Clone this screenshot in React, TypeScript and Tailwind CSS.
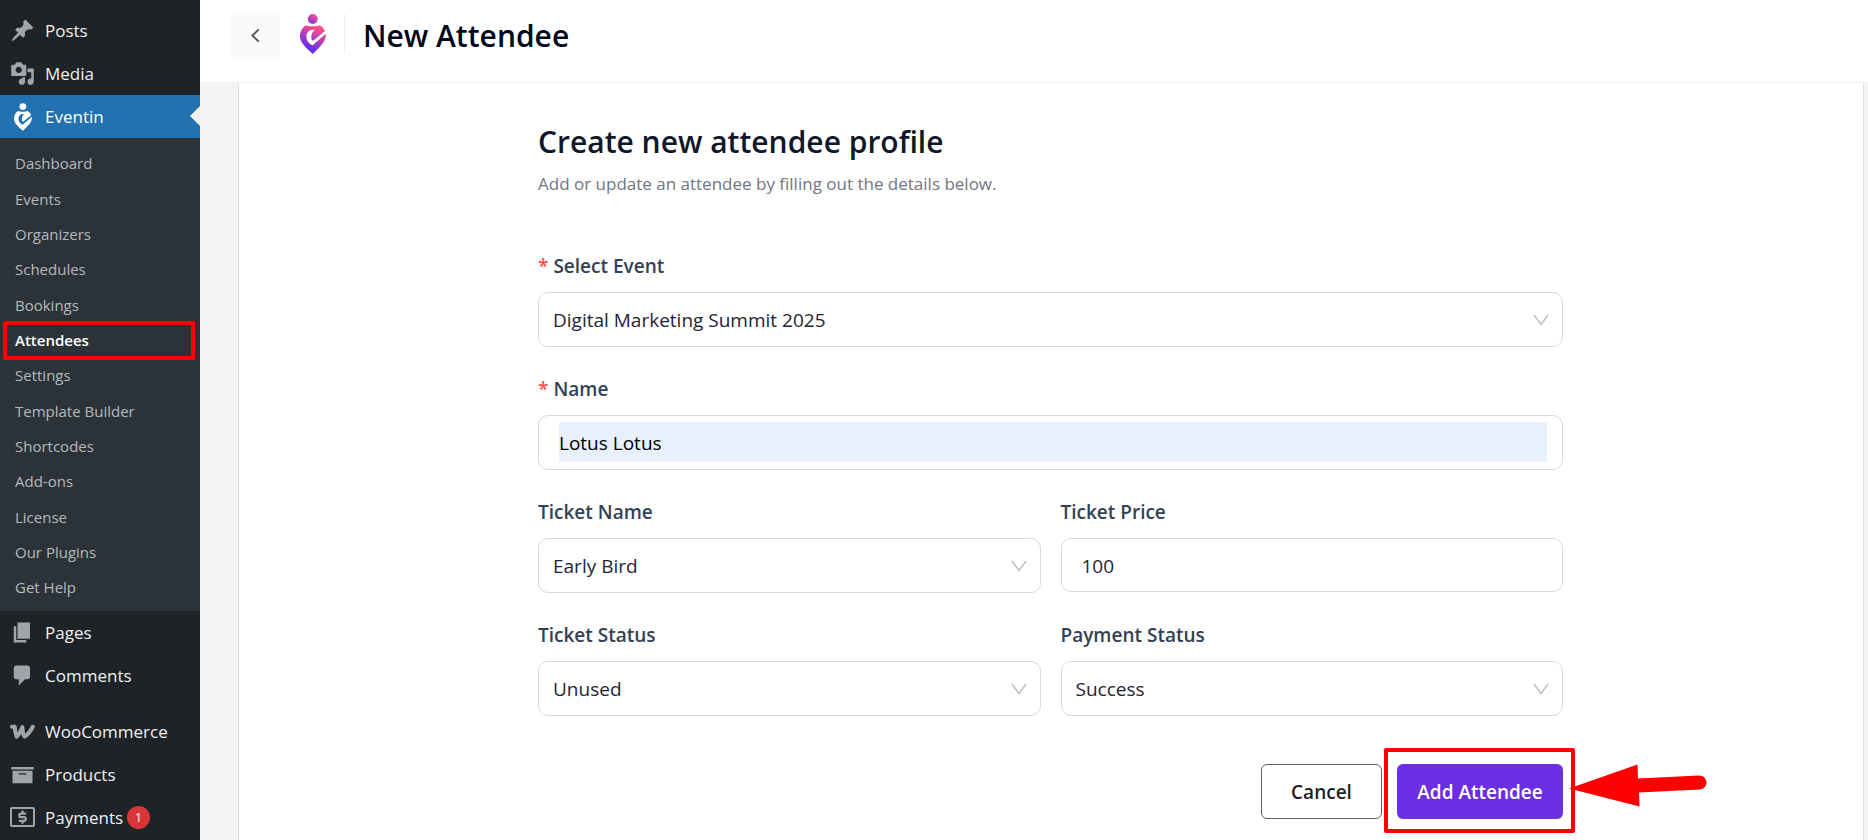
import { useState } from "react";

type IconProps = { className?: string };

const PATHS = {
  post: "M10.44 3.02l1.82-1.82 6.36 6.35-1.83 1.82c-1.05-.68-2.48-.57-3.41.36l-.75.75c-.92.93-1.04 2.35-.35 3.41l-1.83 1.82-2.41-2.41-2.8 2.79c-.42.42-3.38 2.71-3.8 2.29s1.86-3.39 2.28-3.81l2.79-2.79L4.1 9.36l1.83-1.82c1.05.69 2.48.57 3.4-.36l.75-.75c.93-.92 1.05-2.35.36-3.41z",
  media: "M13 11V4c0-.55-.45-1-1-1h-1.67L9 1H5L3.67 3H2c-.55 0-1 .45-1 1v7c0 .55.45 1 1 1h10c.55 0 1-.45 1-1zM7 4.5c1.38 0 2.5 1.12 2.5 2.5S8.38 9.5 7 9.5 4.5 8.38 4.5 7 5.62 4.5 7 4.5zM14 6h5v10.5c0 1.38-1.12 2.5-2.5 2.5S14 17.88 14 16.5s1.12-2.5 2.5-2.5c.17 0 .34.02.5.05V9h-3V6zm-4 8.05V13h2v3.5c0 1.38-1.12 2.5-2.5 2.5S7 17.88 7 16.5 8.12 14 9.5 14c.17 0 .34.02.5.05z",
  page: "M6 15V2h10v13H6zm-1 1h8v2H3V5h2v11z",
  comment: "M5 2h9c1.1 0 2 .9 2 2v7c0 1.1-.9 2-2 2h-2l-5 5v-5H5c-1.1 0-2-.9-2-2V4c0-1.1.9-2 2-2z",
  archive: "M19 4v2H1V4h18zM2 7h16v10H2V7zm11 3V9H7v1h6z",
};

function Dashicon({ name }: { name: keyof typeof PATHS }) {
  return (
    <svg className="size-[25px] shrink-0" viewBox="0 0 20 20" fill="currentColor" aria-hidden="true">
      <path d={PATHS[name]} />
    </svg>
  );
}

function WooIcon() {
  return (
    <svg className="size-[25px] shrink-0" viewBox="0 0 25 25" fill="none" stroke="currentColor" aria-hidden="true">
      <path
        d="M2 7.8H4.8C5 12 5.6 15.2 6.8 17.6C9 15.6 10.8 12 12.4 8C12.5 12 13 15.4 14.6 17.6C17.6 16 20.6 12 22.8 7.8"
        strokeWidth="4"
        strokeLinecap="round"
        strokeLinejoin="round"
      />
    </svg>
  );
}

function PaymentsIcon() {
  return (
    <svg className="size-[25px] shrink-0" viewBox="0 0 25 25" fill="none" stroke="currentColor" aria-hidden="true">
      <rect x="1" y="3" width="23" height="18" rx="1" strokeWidth="2" />
      <path
        d="M16.2 8.6H11a1.8 1.8 0 0 0 0 3.6h3a1.8 1.8 0 0 1 0 3.6H8.8M12.5 5.6v3M12.5 15.8v3"
        strokeWidth="2.2"
      />
    </svg>
  );
}

function EventinMark({ className, fill }: IconProps & { fill: string }) {
  return (
    <svg className={className} viewBox="0 0 26 40" aria-hidden="true">
      <defs>
        <linearGradient id="mark" x1="19" y1="14" x2="9" y2="34" gradientUnits="userSpaceOnUse">
          <stop stopColor="#ff4f8b" />
          <stop offset="1" stopColor="#6a2ee8" />
        </linearGradient>
        <linearGradient id="head" x1="16" y1="0" x2="9" y2="10" gradientUnits="userSpaceOnUse">
          <stop stopColor="#ff4f8b" />
          <stop offset="1" stopColor="#7a35e0" />
        </linearGradient>
      </defs>
      <circle cx="12.8" cy="5" r="4.9" fill={fill === "gradient" ? "url(#head)" : fill} />
      <path
        fill={fill === "gradient" ? "url(#mark)" : fill}
        d="M6 11.2C8.4 12.6 17.2 12.6 19.6 11.2C21.8 12.4 23.8 14.4 25 17L14.2 26C13 27 12 26.6 11.6 25.4C10.8 22 11.6 18.4 15 15.8C9.8 15 6.4 18 6.4 22.4C6.4 26.6 9.2 30 12.6 31.2L25.8 19.8C26.6 26.8 21 32 12.8 40C4.6 32.4 0 28.4 0 22C0 17.4 2.4 13.2 6 11.2Z"
      />
    </svg>
  );
}

const SUBMENU = [
  "Dashboard", "Events", "Organizers", "Schedules", "Bookings", "Attendees", "Settings",
  "Template Builder", "Shortcodes", "Add-ons", "License", "Our Plugins", "Get Help",
];

function MenuItem({ icon, label, badge }: { icon: React.ReactNode; label: string; badge?: number }) {
  return (
    <a href="#" className="flex h-[43px] items-center gap-2.5 pl-2.5 text-[17px] text-[#f0f0f1]">
      <span className="text-[#a0a5aa]">{icon}</span>
      {label}
      {badge && (
        <span className="-ml-1.5 grid size-[23px] place-items-center rounded-full bg-[#d63638] text-[13px] text-white">
          {badge}
        </span>
      )}
    </a>
  );
}

function Sidebar() {
  return (
    <nav className="w-[200px] shrink-0 bg-[#1d2327] pt-[9px]">
      <MenuItem icon={<Dashicon name="post" />} label="Posts" />
      <MenuItem icon={<Dashicon name="media" />} label="Media" />
      <a href="#" className="relative flex h-[43px] items-center gap-2.5 bg-[#2271b1] pl-2.5 text-[17px] text-white">
        <span className="grid w-[25px] place-items-center">
          <EventinMark className="h-7 w-[18px]" fill="#fff" />
        </span>
        Eventin
        <span className="absolute top-[11px] right-0 border-y-10 border-r-10 border-y-transparent border-r-[#f0f0f1]" />
      </a>
      <ul className="flex h-[473px] flex-col bg-[#2c3338] pt-2 pb-1.5 text-[15px] text-[#b4b9be]">
        {SUBMENU.map((item) => (
          <li key={item} className="relative flex flex-1 items-center pl-[15px]">
            <a href="#" className={item === "Attendees" ? "font-semibold text-white" : ""}>{item}</a>
            {item === "Attendees" && (
              <span className="absolute -inset-y-0.5 right-[5px] left-[3px] rounded-xs border-4 border-[#fe0000]" />
            )}
          </li>
        ))}
      </ul>
      <MenuItem icon={<Dashicon name="page" />} label="Pages" />
      <MenuItem icon={<Dashicon name="comment" />} label="Comments" />
      <div className="h-[13px]" />
      <MenuItem icon={<WooIcon />} label="WooCommerce" />
      <MenuItem icon={<Dashicon name="archive" />} label="Products" />
      <MenuItem icon={<PaymentsIcon />} label="Payments" badge={1} />
    </nav>
  );
}

function Header() {
  return (
    <header className="flex h-[83px] items-center border-b border-[#eeeeee] bg-white pb-2.5 pl-[30px]">
      <button type="button" aria-label="Back" className="grid h-12 w-[50px] place-items-center rounded-md bg-[#fafafa]">
        <svg className="size-4" viewBox="0 0 16 16" fill="none" stroke="#555" strokeWidth="1.8">
          <path d="M11.8 1.3L5.4 7.5l6.4 6.2" />
        </svg>
      </button>
      <EventinMark className="mb-1 ml-5 h-10 w-[26px]" fill="gradient" />
      <span className="mx-[18px] mb-1 h-10 w-px bg-[#eeeeee]" />
      <h1 className="text-3xl font-semibold text-[#020617]">New Attendee</h1>
    </header>
  );
}

function Label({ id, text, required }: { id: string; text: string; required?: boolean }) {
  return (
    <label htmlFor={id} className="flex h-7 items-center gap-[5px] text-[19px] font-semibold text-[#334155]">
      {required && <span className="text-[#ff4d4f]">*</span>}
      {text}
    </label>
  );
}

function SelectField({ id, label, value, required }: { id: string; label: string; value: string; required?: boolean }) {
  return (
    <div className="flex flex-col gap-3">
      <Label id={id} text={label} required={required} />
      <div className="relative">
        <select
          id={id}
          defaultValue={value}
          className="h-[55px] w-full appearance-none rounded-[10px] border border-[#d9d9d9] bg-white px-3.5 pt-0.5 text-[19px] text-[#1f2433]"
        >
          <option>{value}</option>
        </select>
        <svg
          className="pointer-events-none absolute top-5 right-3.5 size-4"
          viewBox="0 0 16 16"
          fill="none"
          stroke="#bfbfbf"
          strokeWidth="1.5"
        >
          <path d="M1 3l7 9.5L15 3" />
        </svg>
      </div>
    </div>
  );
}

export default function App() {
  const [name, setName] = useState("Lotus Lotus");
  const [price, setPrice] = useState("100");

  return (
    <div className="flex min-h-screen bg-[#f3f4f6] font-['Open_Sans','Noto_Sans',sans-serif]">
      <Sidebar />
      <div className="flex min-w-0 flex-1 flex-col">
        <Header />
        <main className="mr-1 ml-[38px] flex-1 border-x border-[#dcdfe4] bg-white pt-9 pr-px">
          <form className="mx-auto max-w-[1025px]" onSubmit={(e) => e.preventDefault()}>
            <h2 className="text-3xl leading-[46px] font-semibold text-[#0f172a]">Create new attendee profile</h2>
            <p className="mt-1.5 mb-[55px] text-[17px] leading-[26px] text-[#71767f]">
              Add or update an attendee by filling out the details below.
            </p>

            <div className="flex flex-col gap-7">
              <SelectField id="event" label="Select Event" value="Digital Marketing Summit 2025" required />
              <div className="flex flex-col gap-3">
                <Label id="name" text="Name" required />
                <div className="flex h-[55px] items-start rounded-[10px] border border-[#d9d9d9] pt-1.5 pr-[15px] pl-5">
                  <input
                    id="name"
                    value={name}
                    onChange={(e) => setName(e.target.value)}
                    className="h-10 w-full bg-[#e8f0fe] pt-0.5 text-[19px] text-black outline-none"
                  />
                </div>
              </div>
              <div className="grid grid-cols-2 gap-x-5 gap-y-7">
                <SelectField id="ticket-name" label="Ticket Name" value="Early Bird" />
                <div className="flex flex-col gap-3">
                  <Label id="ticket-price" text="Ticket Price" />
                  <input
                    id="ticket-price"
                    value={price}
                    onChange={(e) => setPrice(e.target.value)}
                    className="h-[54px] w-full rounded-[10px] border border-[#d9d9d9] px-5 pt-0.5 text-[19px] text-[#1f2433] outline-none"
                  />
                </div>
                <SelectField id="ticket-status" label="Ticket Status" value="Unused" />
                <SelectField id="payment-status" label="Payment Status" value="Success" />
              </div>
            </div>

            <div className="mt-12 flex justify-end gap-[15px] text-[19px] font-semibold">
              <button type="button" className="h-[55px] w-[121px] rounded-md border border-[#5f6063] pt-0.5 text-[#1f1f1f]">
                Cancel
              </button>
              <div className="relative">
                <button type="submit" className="h-[55px] w-[166px] rounded-md bg-[#6b2ee5] pt-0.5 text-white">
                  Add Attendee
                </button>
                <span className="pointer-events-none absolute -top-4 -right-3 -bottom-3.5 -left-[13px] rounded-xs border-4 border-[#fe0000]" />
                <svg className="pointer-events-none absolute top-0 left-full ml-1.5 h-11 w-[140px]" viewBox="0 0 140 44">
                  <path d="M0 24.5L68.5.5L69 14.5L130 11.5A7 7 0 0 1 131 25.5L70 28.5L70.5 42.5Z" fill="#fe0000" />
                </svg>
              </div>
            </div>
          </form>
        </main>
      </div>
    </div>
  );
}
